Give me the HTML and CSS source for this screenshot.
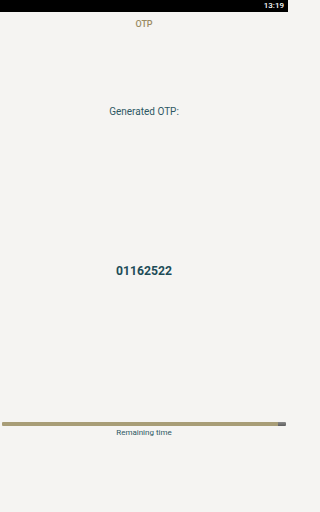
FILE: index.html
```
<!DOCTYPE html>
<html>
<head>
<meta charset="utf-8">
<link rel="stylesheet" href="styles.css">
</head>
<body>
<div class="status"><span class="time">13:19</span></div>
<div class="app">
  <div class="title">OTP</div>
  <div class="label">Generated OTP:</div>
  <div class="code">01162522</div>
  <div class="progress"><div class="fill"></div><div class="rest"></div></div>
  <div class="remain">Remaining time</div>
</div>
</body>
</html>
```
FILE: styles.css
```
html, body { margin: 0; padding: 0; }
html { background: #f5f4f2; }
body {
  width: 288px; height: 512px;
  background: #f5f4f2;
  font-family: Roboto, "Noto Sans", sans-serif;
  overflow: hidden;
}
.status {
  height: 12px;
  background: #000;
  display: flex;
  justify-content: flex-end;
  align-items: center;
  padding-right: 4px;
}
.time { color: #fff; font-size: 8px; font-weight: 500; line-height: 12px; }
.app { display: flex; flex-direction: column; align-items: center; }
.title {
  margin-top: 6px;
  font-size: 9px;
  font-weight: 500;
  color: #9a8b62;
  line-height: 12px;
}
.label {
  margin-top: 76px;
  font-size: 10px;
  color: #2e5864;
  line-height: 12px;
}
.code {
  margin-top: 145px;
  font-size: 12.2px;
  font-weight: 700;
  color: #1d4c58;
  line-height: 16px;
}
.progress {
  margin-top: 143px;
  width: 284px;
  height: 4px;
  display: flex;
  border-radius: 1px;
  overflow: hidden;
}
.fill { flex: 1; background: #a89d77; }
.rest { width: 8px; background: linear-gradient(#8a8a8a, #5e5e5e); }
.remain {
  margin-top: 2px;
  font-size: 8px;
  color: #2e5864;
  line-height: 10px;
}
```
